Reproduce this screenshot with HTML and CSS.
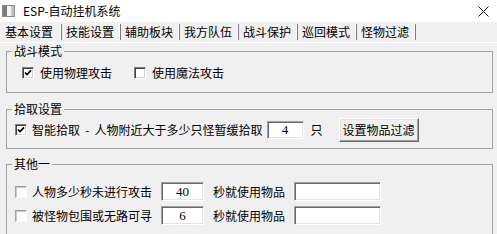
FILE: index.html
```html
<!DOCTYPE html>
<html lang="zh">
<head>
<meta charset="utf-8">
<title>ESP-自动挂机系统</title>
<link rel="stylesheet" href="styles.css">
</head>
<body>
<div class="window">
  <div class="titlebar">
    <svg class="app-icon" width="13" height="12" viewBox="0 0 13 12">
      <rect x="0.5" y="0.5" width="12" height="11" fill="#fff" stroke="#8a8a8a"/>
      <rect x="1" y="1" width="4" height="10" fill="#7d7d7d"/>
      <rect x="5" y="1" width="4" height="10" fill="#f4f4f4"/>
      <rect x="9" y="1" width="3" height="10" fill="#b9c4cc"/>
    </svg>
    <span class="title">ESP-自动挂机系统</span>
    <svg class="close" width="11" height="11" viewBox="0 0 11 11">
      <path d="M0.5 0.5 L10.5 10.5 M10.5 0.5 L0.5 10.5" stroke="#111" stroke-width="1" fill="none"/>
    </svg>
  </div>
  <div class="tabs">
    <span class="tab active">基本设置</span>
    <span class="tab">技能设置</span>
    <span class="tab">辅助板块</span>
    <span class="tab">我方队伍</span>
    <span class="tab">战斗保护</span>
    <span class="tab">巡回模式</span>
    <span class="tab">怪物过滤</span>
  </div>
  <div class="panel">
    <fieldset class="group g1">
      <legend>战斗模式</legend>
      <div class="row">
        <label class="item"><span class="cb dark"><svg viewBox="0 0 8 8" width="8" height="8"><polyline points="1,3.5 3,5.6 7,1.4" fill="none" stroke="#000" stroke-width="1.7"/></svg></span>使用物理攻击</label>
        <label class="item second"><span class="cb dark"></span>使用魔法攻击</label>
      </div>
    </fieldset>
    <fieldset class="group g2">
      <legend>拾取设置</legend>
      <div class="row">
        <label class="item"><span class="cb dark"><svg viewBox="0 0 8 8" width="8" height="8"><polyline points="1,3.5 3,5.6 7,1.4" fill="none" stroke="#000" stroke-width="1.7"/></svg></span><span class="wide-words">智能拾取 - 人物附近大于多少只怪暂缓拾取</span></label>
        <span class="input in-4">4</span>
        <span class="unit">只</span>
        <span class="button">设置物品过滤</span>
      </div>
    </fieldset>
    <fieldset class="group g3">
      <legend>其他一</legend>
      <div class="rows">
        <div class="row">
          <label class="item"><span class="cb light"></span>人物多少秒未进行攻击</label>
          <span class="input in-num">40</span>
          <span class="label">秒就使用物品</span>
          <span class="input in-wide"></span>
        </div>
        <div class="row">
          <label class="item"><span class="cb light"></span>被怪物包围或无路可寻</label>
          <span class="input in-num">6</span>
          <span class="label">秒就使用物品</span>
          <span class="input in-wide"></span>
        </div>
      </div>
    </fieldset>
  </div>
</div>
</body>
</html>
```
FILE: styles.css
```css
html, body {
  margin: 0;
  padding: 0;
}
body {
  width: 497px;
  height: 234px;
  overflow: hidden;
  background: #f0f0f0;
  font-family: "Noto Sans CJK SC", "Liberation Sans", sans-serif;
  font-size: 12px;
  line-height: 14px;
  color: #000;
}
.window {
  display: flex;
  flex-direction: column;
}
.titlebar {
  height: 22px;
  background: #fff;
  display: flex;
  align-items: center;
  padding-left: 2px;
}
.app-icon {
  margin-right: 8px;
  flex: none;
}
.title {
  flex: 1;
}
.close {
  margin-right: 8px;
  flex: none;
}
.tabs {
  height: 20px;
  display: flex;
  align-items: center;
}
.tab {
  height: 16px;
  line-height: 16px;
  padding: 0 6px 0 4px;
  border-right: 1px solid #7a7a7a;
  box-shadow: inset -1px 0 #fff;
}
.tab.active {
  padding: 0 8px 0 5px;
}
.panel {
  border-top: 1px solid #fff;
  padding: 1px 4px 0 6px;
  display: flex;
  flex-direction: column;
}
.group {
  margin: 0;
  padding: 0;
  min-width: 0;
  border: 1px solid #a0a0a0;
}
.group legend {
  margin-left: 5px;
  padding: 0 2px;
  height: 14px;
  line-height: 14px;
}
.g1 .row {
  height: 14px;
  padding: 8px 0 12px 15px;
}
.g2 {
  margin-top: 9px;
}
.g2 .row {
  height: 24px;
  padding: 2px 0 6px 8px;
}
.g3 {
  margin-top: 8px;
}
.rows {
  display: flex;
  flex-direction: column;
  gap: 5px;
  padding: 11px 0 20px 8px;
}
.g3 .row {
  height: 19px;
}
.row {
  display: flex;
  align-items: center;
}
.item {
  display: flex;
  align-items: center;
  gap: 6px;
  white-space: pre;
}
.g2 .item, .g3 .item {
  gap: 5px;
}
.item.second {
  margin-left: 22px;
}
.wide-words {
  word-spacing: 2.5px;
}
.cb {
  box-sizing: border-box;
  width: 12px;
  height: 12px;
  background: #fff;
  display: flex;
  align-items: center;
  justify-content: center;
  flex: none;
  border: 1px solid;
}
.cb.dark {
  border-color: #808080 #fff #fff #808080;
  box-shadow: inset 1px 1px #404040, inset -1px -1px #d4d4d4;
}
.cb.light {
  border-color: #a0a0a0 #fff #fff #a0a0a0;
  box-shadow: inset 1px 1px #c8c8c8;
}
.input {
  box-sizing: border-box;
  height: 19px;
  background: #fff;
  border: 1px solid;
  border-color: #a0a0a0 #fff #fff #a0a0a0;
  box-shadow: inset 1px 1px #696969, inset -1px -1px #e3e3e3;
  display: flex;
  align-items: center;
  justify-content: center;
  font-family: "Liberation Serif", serif;
  font-size: 13px;
  flex: none;
}
.in-4 {
  width: 37px;
  height: 18px;
  margin-left: 4px;
}
.unit {
  margin-left: 7px;
}
.button {
  box-sizing: border-box;
  width: 80px;
  height: 24px;
  margin-left: 16px;
  border: 1px solid;
  border-color: #fff #696969 #696969 #fff;
  box-shadow: inset -1px -1px #a0a0a0, inset 1px 1px #e3e3e3;
  display: flex;
  align-items: center;
  justify-content: center;
  background: #f0f0f0;
}
.in-num {
  width: 43px;
  margin-left: 9px;
}
.label {
  margin-left: 9px;
}
.in-wide {
  width: 87px;
  margin-left: 9px;
}
```
